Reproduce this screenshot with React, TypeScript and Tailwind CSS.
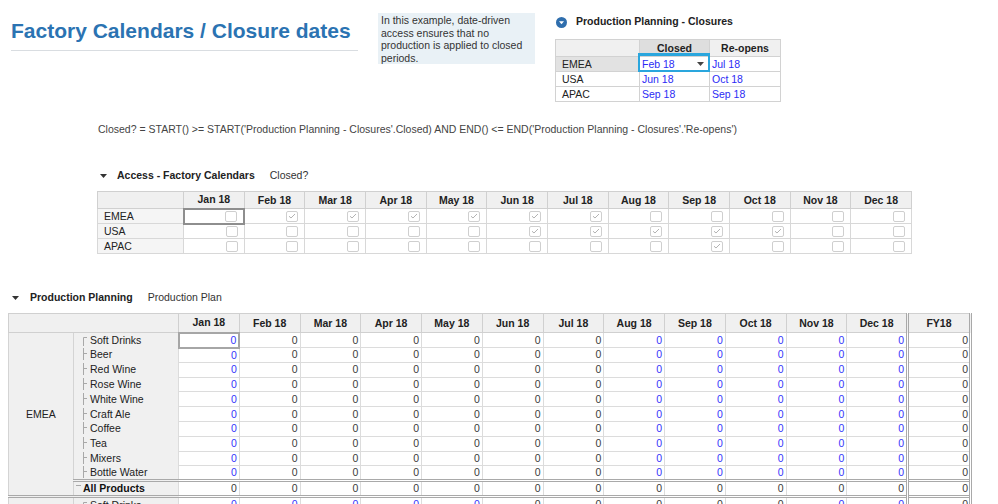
import React from 'react';

const MONTHS = ['Jan 18', 'Feb 18', 'Mar 18', 'Apr 18', 'May 18', 'Jun 18', 'Jul 18', 'Aug 18', 'Sep 18', 'Oct 18', 'Nov 18', 'Dec 18'];
const PRODUCTS = ['Soft Drinks', 'Beer', 'Red Wine', 'Rose Wine', 'White Wine', 'Craft Ale', 'Coffee', 'Tea', 'Mixers', 'Bottle Water'];

const ACCESS = [
  { region: 'EMEA', closed: [0, 1, 1, 1, 1, 1, 1, 0, 0, 0, 0, 0] },
  { region: 'USA', closed: [0, 0, 0, 0, 0, 1, 1, 1, 1, 1, 0, 0] },
  { region: 'APAC', closed: [0, 0, 0, 0, 0, 0, 0, 0, 1, 0, 0, 0] },
];

const CLOSURES = [
  { region: 'EMEA', closed: 'Feb 18', reopens: 'Jul 18' },
  { region: 'USA', closed: 'Jun 18', reopens: 'Oct 18' },
  { region: 'APAC', closed: 'Sep 18', reopens: 'Sep 18' },
];

function Disclosure() {
  return (
    <svg width="7" height="4" viewBox="0 0 7 4" className="shrink-0">
      <path d="M0 0 H7 L3.5 4 Z" fill="#333" />
    </svg>
  );
}

function Checkbox({ checked }: { checked: boolean }) {
  return (
    <span className="inline-flex h-[11px] w-[12px] items-center justify-center rounded-[2px] border border-[#cfcfcf] bg-white align-middle">
      {checked && (
        <svg width="8" height="6" viewBox="0 0 8 6">
          <path d="M1 3.2 L3 5 L7 1" stroke="#b3b3b3" strokeWidth="1" fill="none" />
        </svg>
      )}
    </span>
  );
}

function Branch({ first }: { first: boolean }) {
  return (
    <svg width="5" height="12" viewBox="0 0 5 12" className="mr-[2px] inline-block align-[-2px]">
      {first ? (
        <path d="M0.5 12 V3.5 H4" stroke="#a8a8a8" strokeWidth="1" fill="none" />
      ) : (
        <path d="M0.5 0 V12 M0.5 5.5 H4" stroke="#a8a8a8" strokeWidth="1" fill="none" />
      )}
    </svg>
  );
}

function ClosuresTable() {
  return (
    <div className="ml-[20px] mt-[15px]">
      <div className="flex h-[14px] items-center gap-[9px] pl-[1px]">
        <svg width="11" height="11" viewBox="0 0 11 11">
          <circle cx="5.5" cy="5.5" r="5.5" fill="#2f6ead" />
          <path d="M3 4.3 H8 L5.5 7.2 Z" fill="#fff" />
        </svg>
        <span className="font-bold text-[#222]">Production Planning - Closures</span>
      </div>
      <table className="mt-[10px] w-[225px] table-fixed border-collapse leading-[13px]">
        <colgroup>
          <col className="w-[84px]" />
          <col className="w-[70px]" />
          <col className="w-[71px]" />
        </colgroup>
        <thead>
          <tr className="h-[17px]">
            <th className="border border-[#d2d2d2] bg-[#f0f0f0]" />
            <th className="border border-[#d2d2d2] bg-[#dedede] font-bold text-[#222]">Closed</th>
            <th className="border border-[#d2d2d2] bg-[#f0f0f0] font-bold text-[#222]">Re-opens</th>
          </tr>
        </thead>
        <tbody>
          {CLOSURES.map((r, i) => (
            <tr key={r.region} className="h-[15px]">
              <td className={`border border-[#d2d2d2] pl-[6px] text-[#222] ${i === 0 ? 'bg-[#e2e2e2]' : 'bg-white'}`}>{r.region}</td>
              <td className="relative border border-[#d2d2d2] pl-[2px] text-[#2b2bf5]">
                {r.closed}
                {i === 0 && (
                  <div className="pointer-events-none absolute -bottom-[1px] -left-[2px] -right-[1px] -top-[4px] border-2 border-t-[3px] border-[#2aa6dd]">
                    <svg width="7" height="4" viewBox="0 0 7 4" className="absolute right-[4px] top-[6px]">
                      <path d="M0 0 H7 L3.5 4 Z" fill="#444" />
                    </svg>
                  </div>
                )}
              </td>
              <td className="border border-[#d2d2d2] pl-[2px] text-[#2b2bf5]">{r.reopens}</td>
            </tr>
          ))}
        </tbody>
      </table>
    </div>
  );
}

function AccessTable() {
  return (
    <>
      <div className="ml-[100px] mt-[33px] flex h-[14px] items-center">
        <Disclosure />
        <span className="ml-[10px] font-bold text-[#222]">Access - Factory Calendars</span>
        <span className="ml-[15px] text-[#333]">Closed?</span>
      </div>
      <table className="ml-[97px] mt-[8px] w-[815px] table-fixed border-collapse leading-[13px]">
        <colgroup>
          <col className="w-[86px]" />
          {MONTHS.map((m) => (
            <col key={m} />
          ))}
        </colgroup>
        <thead>
          <tr className="h-[17px]">
            <th className="border border-[#d0d0d0] bg-[#f0f0f0]" />
            {MONTHS.map((m) => (
              <th key={m} className="border border-[#d0d0d0] bg-[#f0f0f0] font-bold text-[#222]">
                {m}
              </th>
            ))}
          </tr>
        </thead>
        <tbody>
          {ACCESS.map((r, i) => (
            <tr key={r.region} className="h-[15px]">
              <td className="border border-[#d8d8d8] bg-[#f5f5f5] pl-[6px] text-[#222]">{r.region}</td>
              {r.closed.map((c, j) => (
                <td
                  key={j}
                  className={`pr-[6px] text-right leading-[0] ${i === 0 && j === 0 ? 'border-2 border-[#8e8e8e]' : 'border border-[#d8d8d8]'}`}
                >
                  <Checkbox checked={c === 1} />
                </td>
              ))}
            </tr>
          ))}
        </tbody>
      </table>
    </>
  );
}

function RegionBlock({ region, closed, first, rows }: { region: string; closed: number[]; first: boolean; rows: number }) {
  const numCls = (j: number) => (closed[j] ? 'text-[#3a3a3a]' : 'text-[#3434fb]');
  return (
    <>
      {PRODUCTS.slice(0, rows).map((p, i) => (
        <tr key={region + p} className="h-[14.8px]">
          {i === 0 && (
            <td
              rowSpan={11}
              className={`border border-[#d4d4d4] bg-[#f0f0f0] text-center text-[#222] ${first ? '' : 'border-t-[3px] border-double border-t-[#a9a9a9]'}`}
            >
              {first ? region : ''}
            </td>
          )}
          <td
            className={`whitespace-nowrap bg-[#f0f0f0] pl-[9px] text-[#222] ${i === 0 && !first ? 'border-t-[3px] border-double border-[#a9a9a9]' : ''}`}
          >
            <Branch first={i === 0} />
            {p}
          </td>
          {MONTHS.map((m, j) => (
            <td
              key={m}
              className={`pr-[2px] text-right ${numCls(j)} ${
                first && i === 0 && j === 0
                  ? 'border-2 border-[#a6a6a6]'
                  : i === 0 && !first
                    ? 'border border-t-[3px] border-double border-[#dcdcdc] border-t-[#a9a9a9]'
                    : 'border border-[#dcdcdc]'
              }`}
            >
              0
            </td>
          ))}
          <td
            className={`border-x-[3px] border-y border-double border-x-[#a9a9a9] border-y-[#dcdcdc] pr-[1px] text-right text-[#3a3a3a] ${i === 0 && !first ? 'border-t-[3px] border-t-[#a9a9a9]' : ''}`}
          >
            0
          </td>
        </tr>
      ))}
      {rows === PRODUCTS.length && (
        <tr className="h-[15px]">
          <td className="whitespace-nowrap border-t-[3px] border-double border-[#a9a9a9] bg-[#f0f0f0] pl-[2px] font-bold text-[#111]">
            <svg width="6" height="12" viewBox="0 0 6 12" className="mr-[1px] inline-block align-[-2px]">
              <path d="M0 3.5 H5" stroke="#a8a8a8" strokeWidth="1" />
            </svg>
            All Products
          </td>
          {MONTHS.map((m) => (
            <td key={m} className="border border-t-[3px] border-double border-[#dcdcdc] border-t-[#a9a9a9] pr-[2px] text-right text-[#3a3a3a]">
              0
            </td>
          ))}
          <td className="border-[3px] border-b border-double border-[#a9a9a9] border-b-[#dcdcdc] pr-[1px] text-right text-[#3a3a3a]">0</td>
        </tr>
      )}
    </>
  );
}

function ProductionTable() {
  return (
    <>
      <div className="ml-[12px] mt-[37px] flex h-[14px] items-center">
        <Disclosure />
        <span className="ml-[11px] font-bold text-[#222]">Production Planning</span>
        <span className="ml-[15px] text-[#333]">Production Plan</span>
      </div>
      <table className="ml-[8px] mt-[8px] w-[962px] table-fixed border-collapse leading-[13px]">
        <colgroup>
          <col className="w-[65px]" />
          <col className="w-[105px]" />
          {MONTHS.map((m) => (
            <col key={m} className="w-[60.75px]" />
          ))}
          <col className="w-[63px]" />
        </colgroup>
        <thead>
          <tr className="h-[19px]">
            <th colSpan={2} className="border border-[#d0d0d0] bg-[#f0f0f0]" />
            {MONTHS.map((m) => (
              <th key={m} className="border border-[#d0d0d0] bg-[#f0f0f0] font-bold text-[#222]">
                {m}
              </th>
            ))}
            <th className="border-x-[3px] border-y border-double border-x-[#a9a9a9] border-y-[#d0d0d0] bg-[#f0f0f0] font-bold text-[#222]">FY18</th>
          </tr>
        </thead>
        <tbody>
          <RegionBlock region="EMEA" closed={ACCESS[0].closed} first rows={10} />
          <RegionBlock region="USA" closed={ACCESS[1].closed} first={false} rows={1} />
        </tbody>
      </table>
    </>
  );
}

export default function App() {
  return (
    <div className="h-[504px] w-[998px] overflow-hidden bg-white font-['Liberation_Sans',Arial,sans-serif] text-[10.5px] text-[#333]">
      <div className="flex items-start">
        <div className="ml-[11px] mt-[18px] w-[347px] whitespace-nowrap border-b border-[#d9dde1] pb-[6px] text-[21px] font-bold leading-[26px] text-[#2b73b2]">
          Factory Calendars / Closure dates
        </div>
        <div className="ml-[20px] mt-[13px] h-[51px] w-[157px] bg-[#e9f1f6] px-[3px] pt-[1px] leading-[12.5px] text-[#333]">
          In this example, date-driven access ensures that no production is applied to closed periods.
        </div>
        <ClosuresTable />
      </div>
      <div className="ml-[98px] mt-[20px] leading-[14px] text-[#444]">
        Closed? = START() &gt;= START('Production Planning - Closures'.Closed) AND END() &lt;= END('Production Planning - Closures'.'Re-opens')
      </div>
      <AccessTable />
      <ProductionTable />
    </div>
  );
}
